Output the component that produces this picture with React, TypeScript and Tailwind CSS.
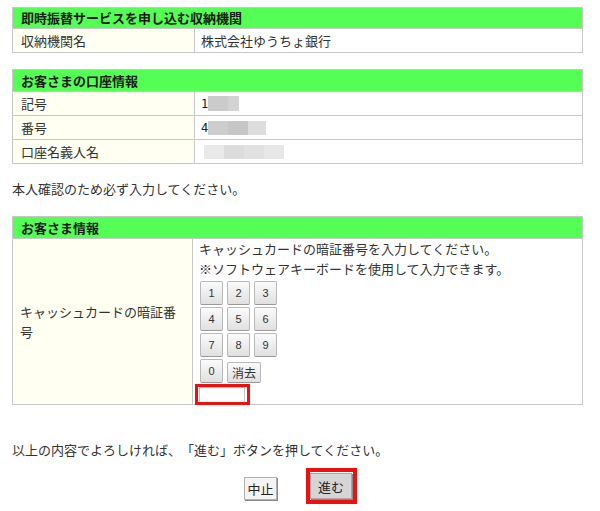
import React from 'react';

const Key: React.FC<{ label: string; wide?: boolean }> = ({ label, wide }) => (
    <button
        type="button"
        className={
            wide
                ? "w-[34px] h-[21px] rounded-[2px] border border-[#b8b8b8] border-b-[#9a9a9a] bg-linear-to-b from-[#fbfbfb] to-[#e0e0e0] text-[12px] text-[#333] leading-none"
                : "w-[23px] h-[24px] rounded-[2px] border border-[#b8b8b8] border-b-[#9a9a9a] bg-linear-to-b from-[#fbfbfb] to-[#e0e0e0] text-[11px] text-[#333] leading-none font-['Liberation_Sans',sans-serif]"
        }
    >
        {label}
    </button>
);

const Header: React.FC<{ title: string }> = ({ title }) => (
    <div className="h-[21px] bg-[#55fe55] px-2 font-bold text-[#1a1a1a] leading-[21px]">{title}</div>
);

const Row: React.FC<{ label: string; children?: React.ReactNode }> = ({ label, children }) => (
    <div className="flex h-[24px] border-t border-[#c8c8c8]">
        <div className="w-[182px] shrink-0 bg-[#fffff2] border-r border-[#c8c8c8] px-2 leading-[23px]">{label}</div>
        <div className="flex-1 px-[6px] flex items-center">{children}</div>
    </div>
);

const App: React.FC = () => {
    return (
        <div className="w-[600px] h-[511px] bg-white px-[12px] pt-[7px] text-[13px] text-[#333] [text-spacing-trim:space-all] font-['Noto_Sans_CJK_JP','Liberation_Sans',sans-serif]">
            {/* 収納機関 */}
            <div className="w-[571px] border border-[#c8c8c8]">
                <div className="h-[20px] bg-[#55fe55] px-2 font-bold text-[#1a1a1a] leading-[20px]">即時振替サービスを申し込む収納機関</div>
                <div className="flex h-[24px] border-t border-[#c8c8c8]">
                    <div className="w-[182px] shrink-0 bg-[#fffff2] border-r border-[#c8c8c8] px-2 leading-[23px]">収納機関名</div>
                    <div className="flex-1 px-[6px] leading-[23px]">株式会社ゆうちょ銀行</div>
                </div>
            </div>

            {/* 口座情報 */}
            <div className="w-[571px] mt-[16px] border border-[#c8c8c8]">
                <Header title="お客さまの口座情報" />
                <Row label="記号">
                    <span className="font-['DejaVu_Sans_Mono',monospace] text-[#222] text-[12px]">1</span>
                    <span className="inline-block w-[20px] h-[15px] bg-[#cbcbcb]" />
                    <span className="inline-block w-[11px] h-[15px] bg-[#d3d3d3]" />
                </Row>
                <Row label="番号">
                    <span className="font-['DejaVu_Sans_Mono',monospace] text-[#222] text-[12px]">4</span>
                    <span className="inline-block w-[20px] h-[14px] bg-[#cdcdcd]" />
                    <span className="inline-block w-[20px] h-[14px] bg-[#c6c6c6]" />
                    <span className="inline-block w-[18px] h-[14px] bg-[#dddddd]" />
                </Row>
                <Row label="口座名義人名">
                    <span className="ml-[3px] inline-block w-[20px] h-[14px] bg-[#e9e9e9]" />
                    <span className="inline-block w-[20px] h-[14px] bg-[#dcdcdc]" />
                    <span className="inline-block w-[20px] h-[14px] bg-[#e1e1e1]" />
                    <span className="inline-block w-[20px] h-[14px] bg-[#e7e7e7]" />
                </Row>
            </div>

            <p className="mt-[15px] leading-[20px]">本人確認のため必ず入力してください。</p>

            {/* お客さま情報 */}
            <div className="w-[571px] mt-[17px] border border-[#c8c8c8]">
                <Header title="お客さま情報" />
                <div className="flex border-t border-[#c8c8c8]">
                    <div className="w-[180px] shrink-0 bg-[#fffff2] border-r border-[#c8c8c8] pl-[7px] pr-2 flex items-center leading-[20px]">
                        キャッシュカードの暗証番号
                    </div>
                    <div className="flex-1 pl-[6px] pb-[1px] leading-[20px]">
                        <div>キャッシュカードの暗証番号を入力してください。</div>
                        <div>※ソフトウェアキーボードを使用して入力できます。</div>
                        <div className="mt-[2px] ml-[1px] flex flex-col gap-y-[2px]">
                            <div className="flex gap-x-[4px]">
                                <Key label="1" />
                                <Key label="2" />
                                <Key label="3" />
                            </div>
                            <div className="flex gap-x-[4px]">
                                <Key label="4" />
                                <Key label="5" />
                                <Key label="6" />
                            </div>
                            <div className="flex gap-x-[4px]">
                                <Key label="7" />
                                <Key label="8" />
                                <Key label="9" />
                            </div>
                            <div className="flex items-end gap-x-[4px]">
                                <Key label="0" />
                                <Key label="消去" wide />
                            </div>
                        </div>
                        <div className="mt-[4px] relative w-[46px] h-[16px]">
                            <input type="password" className="block w-[46px] h-[16px] border border-[#c4c4c4] bg-white outline-none" />
                            <div className="absolute -left-[4px] -right-[5px] -top-[3px] -bottom-[2px] border-[3px] border-[#ec1010]" />
                        </div>
                    </div>
                </div>
            </div>

            <p className="mt-[35px] leading-[20px]">以上の内容でよろしければ、「進む」ボタンを押してください。</p>

            <div className="mt-[8px] flex items-start pl-[232px]">
                <button type="button" className="mt-[9px] w-[33px] h-[23px] border border-[#b0b0b0] bg-[#f4f4f4] shadow-[1px_1px_0_#8a8a8a] text-[13px] text-[#222] leading-none">
                    中止
                </button>
                <div className="ml-[29px] border-[4px] border-[#ec1010] pr-[1px] py-[1px]">
                    <button type="button" className="block w-[42px] h-[26px] border border-[#a8a8a8] bg-[#d5d5d5] shadow-[1px_1px_0_#8a8a8a] text-[13px] text-[#222] leading-none">
                        進む
                    </button>
                </div>
            </div>
        </div>
    );
};

export default App;
